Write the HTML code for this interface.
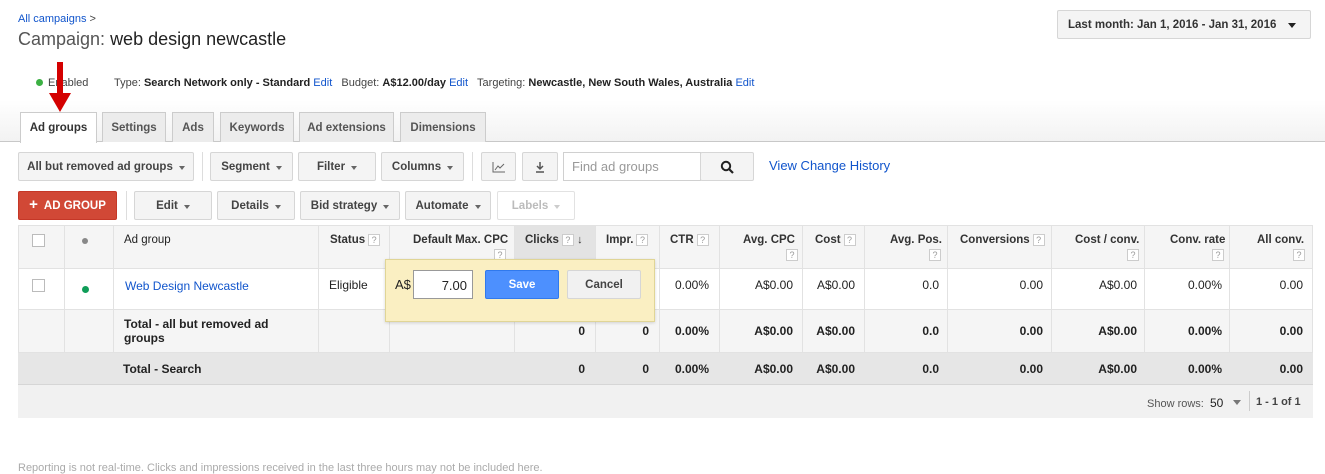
<!DOCTYPE html>
<html><head><meta charset="utf-8"><style>
*{box-sizing:border-box;margin:0;padding:0}
body{width:1325px;height:468px;overflow:hidden;background:#fff;font-family:"Liberation Sans",Arial,sans-serif;font-size:12px;color:#222;position:relative}
.a{position:absolute}
a,.lk{color:#1155cc;text-decoration:none}
.btn{position:absolute;height:29px;border:1px solid #d6d6d6;border-radius:2px;background:#f4f4f4;font-weight:bold;font-size:11.5px;color:#444;display:flex;align-items:center;justify-content:center}
.car{display:inline-block;width:0;height:0;border-left:3.5px solid transparent;border-right:3.5px solid transparent;border-top:4px solid #666;margin-left:6px;margin-top:2px}
.tab{position:absolute;top:112px;height:30px;border:1px solid #ccc;border-bottom:none;background:#ececec;font-weight:bold;font-size:11.5px;color:#555;display:flex;align-items:center;justify-content:center}
.q{display:inline-block;width:12px;height:12px;border:1px solid #ccc;font-size:9px;color:#999;text-align:center;line-height:10px;font-weight:normal;vertical-align:middle;margin-left:3px;background:#fff}
.vl{position:absolute;width:1px;background:#e2e2e2}
.h{position:absolute;top:234px;font-weight:bold;font-size:11.5px;color:#333}
.c{position:absolute;font-size:12px}
.b{font-weight:bold}
</style></head><body>
<div class="a lk" style="left:18px;top:13px;font-size:11px">All campaigns <span style="color:#444">&gt;</span></div>
<div class="a" style="left:18px;top:29px;font-size:18px;color:#555">Campaign: <span style="color:#222">web design newcastle</span></div>

<div class="btn" style="left:1057px;top:10px;width:254px;height:29px;justify-content:flex-start;padding-left:10px;color:#333">Last month: Jan 1, 2016 - Jan 31, 2016 <span class="car" style="margin-left:12px;border-top-color:#222;border-left-width:4px;border-right-width:4px;border-top-width:5px"></span></div>

<div class="a" style="left:36px;top:79px;width:7px;height:7px;border-radius:50%;background:#3cb043"></div>
<div class="a" style="left:48px;top:77px;font-size:11px;color:#444">Enabled</div>
<div class="a" style="left:114px;top:77px;font-size:11px;color:#444">Type: <b style="color:#222">Search Network only - Standard</b> <span class="lk">Edit</span>&nbsp;&nbsp; Budget: <b style="color:#222">A$12.00/day</b> <span class="lk">Edit</span>&nbsp;&nbsp; Targeting: <b style="color:#222">Newcastle, New South Wales, Australia</b> <span class="lk">Edit</span></div>

<div class="a" style="left:0;top:100px;width:1325px;height:42px;background:linear-gradient(#fff,#f2f2f2)"></div>
<div class="a" style="left:0;top:141px;width:1325px;height:1px;background:#c8c8c8"></div>
<div class="tab" style="left:20px;width:77px;background:#fff;color:#333;height:31px;z-index:2">Ad groups</div>
<div class="tab" style="left:102px;width:64px">Settings</div>
<div class="tab" style="left:172px;width:42px">Ads</div>
<div class="tab" style="left:220px;width:74px">Keywords</div>
<div class="tab" style="left:299px;width:95px">Ad extensions</div>
<div class="tab" style="left:400px;width:86px">Dimensions</div>

<svg class="a" style="left:48px;top:62px;z-index:5" width="24" height="52"><rect x="9" y="0" width="6" height="34" fill="#d40000"/><polygon points="1,31 23,31 12,50" fill="#d40000"/></svg>

<div class="btn" style="left:18px;top:152px;width:176px">All but removed ad groups<span class="car"></span></div>
<div class="a" style="left:202px;top:152px;width:1px;height:29px;background:#ddd"></div>
<div class="btn" style="left:210px;top:152px;width:83px">Segment<span class="car"></span></div>
<div class="btn" style="left:298px;top:152px;width:78px">Filter<span class="car"></span></div>
<div class="btn" style="left:381px;top:152px;width:83px">Columns<span class="car"></span></div>
<div class="a" style="left:472px;top:152px;width:1px;height:29px;background:#ddd"></div>
<div class="btn" style="left:481px;top:152px;width:35px"><svg width="14" height="12"><path d="M1 1V11H13" stroke="#666" fill="none"/><path d="M3 9L6 5L8 7L12 3" stroke="#666" fill="none"/></svg></div>
<div class="btn" style="left:522px;top:152px;width:36px"><svg width="12" height="12"><path d="M6 1V8M3 5L6 8L9 5M2 11H10" stroke="#555" stroke-width="1.5" fill="none"/></svg></div>
<div class="a" style="left:563px;top:152px;width:138px;height:29px;border:1px solid #d0d0d0;color:#999;font-size:13px;padding:6px 8px">Find ad groups</div>
<div class="btn" style="left:700px;top:152px;width:54px"><svg width="14" height="14"><circle cx="6" cy="6" r="4.2" stroke="#222" stroke-width="2" fill="none"/><path d="M9 9L13 13" stroke="#222" stroke-width="2.2"/></svg></div>
<div class="a lk" style="left:769px;top:158px;font-size:13px">View Change History</div>

<div class="btn" style="left:18px;top:191px;width:99px;background:#d14836;border-color:#c53727;color:#fff"><span style="font-size:15px;margin-right:6px;margin-top:-2px">+</span>AD GROUP</div>
<div class="a" style="left:126px;top:191px;width:1px;height:29px;background:#ddd"></div>
<div class="btn" style="left:134px;top:191px;width:78px">Edit<span class="car"></span></div>
<div class="btn" style="left:217px;top:191px;width:78px">Details<span class="car"></span></div>
<div class="btn" style="left:300px;top:191px;width:100px">Bid strategy<span class="car"></span></div>
<div class="btn" style="left:405px;top:191px;width:86px">Automate<span class="car"></span></div>
<div class="btn" style="left:497px;top:191px;width:78px;background:#fff;color:#bbb;border-color:#e2e2e2">Labels<span class="car" style="border-top-color:#ccc"></span></div>

<!-- table -->
<div class="a" style="left:18px;top:225px;width:1295px;height:44px;background:#f5f5f5;border:1px solid #e2e2e2"></div>
<div class="a" style="left:514px;top:226px;width:81px;height:43px;background:#e3e3e3"></div>
<div class="a" style="left:18px;top:269px;width:1295px;height:40px;background:#fff;border-left:1px solid #e2e2e2;border-right:1px solid #e2e2e2"></div>
<div class="a" style="left:18px;top:309px;width:1295px;height:44px;background:#f5f5f5;border:1px solid #e2e2e2"></div>
<div class="a" style="left:18px;top:353px;width:1295px;height:32px;background:#e6e6e6;border-bottom:1px solid #d6d6d6"></div>
<div class="a" style="left:18px;top:385px;width:1295px;height:33px;background:#f1f1f1"></div>
<div class="vl" style="left:64px;top:225px;height:128px"></div>
<div class="vl" style="left:113px;top:225px;height:128px"></div>
<div class="vl" style="left:318px;top:225px;height:128px"></div>
<div class="vl" style="left:389px;top:225px;height:128px"></div>
<div class="vl" style="left:514px;top:225px;height:128px"></div>
<div class="vl" style="left:595px;top:225px;height:128px"></div>
<div class="vl" style="left:659px;top:225px;height:128px"></div>
<div class="vl" style="left:719px;top:225px;height:128px"></div>
<div class="vl" style="left:802px;top:225px;height:128px"></div>
<div class="vl" style="left:864px;top:225px;height:128px"></div>
<div class="vl" style="left:947px;top:225px;height:128px"></div>
<div class="vl" style="left:1051px;top:225px;height:128px"></div>
<div class="vl" style="left:1144px;top:225px;height:128px"></div>
<div class="vl" style="left:1229px;top:225px;height:128px"></div>

<div class="a" style="left:32px;top:234px;width:13px;height:13px;border:1px solid #bbb;background:#fff"></div>
<div class="a" style="left:82px;top:238px;width:6px;height:6px;border-radius:50%;background:#888"></div>
<div class="h" style="left:124px;font-weight:normal;color:#222">Ad group</div>
<div class="h" style="left:330px">Status<span class="q">?</span></div>
<div class="h" style="left:413px">Default Max. CPC</div><span class="q a" style="left:491px;top:249px">?</span>
<div class="h" style="left:525px">Clicks<span class="q">?</span> <span style="font-size:11px">&#8595;</span></div>
<div class="h" style="left:606px">Impr.<span class="q">?</span></div>
<div class="h" style="left:670px">CTR<span class="q">?</span></div>
<div class="h" style="left:743px">Avg. CPC</div><span class="q a" style="left:783px;top:249px">?</span>
<div class="h" style="left:815px">Cost<span class="q">?</span></div>
<div class="h" style="left:890px">Avg. Pos.</div><span class="q a" style="left:926px;top:249px">?</span>
<div class="h" style="left:960px">Conversions<span class="q">?</span></div>
<div class="h" style="left:1075px">Cost / conv.</div><span class="q a" style="left:1124px;top:249px">?</span>
<div class="h" style="left:1170px">Conv. rate</div><span class="q a" style="left:1209px;top:249px">?</span>
<div class="h" style="left:1257px">All conv.</div><span class="q a" style="left:1290px;top:249px">?</span>

<!-- row1 -->
<div class="a" style="left:32px;top:279px;width:13px;height:13px;border:1px solid #bbb;background:#fff"></div>
<div class="a" style="left:82px;top:286px;width:7px;height:7px;border-radius:50%;background:#0f9d58"></div>
<div class="c lk" style="left:125px;top:279px">Web Design Newcastle</div>
<div class="c" style="left:329px;top:278px">Eligible</div>
<div class="c" style="left:659px;width:50px;text-align:right;top:278px">0.00%</div>
<div class="c" style="left:719px;width:74px;text-align:right;top:278px">A$0.00</div>
<div class="c" style="left:802px;width:53px;text-align:right;top:278px">A$0.00</div>
<div class="c" style="left:864px;width:75px;text-align:right;top:278px">0.0</div>
<div class="c" style="left:947px;width:96px;text-align:right;top:278px">0.00</div>
<div class="c" style="left:1051px;width:86px;text-align:right;top:278px">A$0.00</div>
<div class="c" style="left:1144px;width:78px;text-align:right;top:278px">0.00%</div>
<div class="c" style="left:1229px;width:74px;text-align:right;top:278px">0.00</div>

<!-- row2 -->
<div class="c b" style="left:124px;top:317px;line-height:14px">Total - all but removed ad<br>groups</div>
<div class="c b" style="left:514px;width:71px;text-align:right;top:324px">0</div>
<div class="c b" style="left:595px;width:54px;text-align:right;top:324px">0</div>
<div class="c b" style="left:659px;width:50px;text-align:right;top:324px">0.00%</div>
<div class="c b" style="left:719px;width:74px;text-align:right;top:324px">A$0.00</div>
<div class="c b" style="left:802px;width:53px;text-align:right;top:324px">A$0.00</div>
<div class="c b" style="left:864px;width:75px;text-align:right;top:324px">0.0</div>
<div class="c b" style="left:947px;width:96px;text-align:right;top:324px">0.00</div>
<div class="c b" style="left:1051px;width:86px;text-align:right;top:324px">A$0.00</div>
<div class="c b" style="left:1144px;width:78px;text-align:right;top:324px">0.00%</div>
<div class="c b" style="left:1229px;width:74px;text-align:right;top:324px">0.00</div>

<!-- row3 -->
<div class="c b" style="left:123px;top:362px">Total - Search</div>
<div class="c b" style="left:514px;width:71px;text-align:right;top:362px">0</div>
<div class="c b" style="left:595px;width:54px;text-align:right;top:362px">0</div>
<div class="c b" style="left:659px;width:50px;text-align:right;top:362px">0.00%</div>
<div class="c b" style="left:719px;width:74px;text-align:right;top:362px">A$0.00</div>
<div class="c b" style="left:802px;width:53px;text-align:right;top:362px">A$0.00</div>
<div class="c b" style="left:864px;width:75px;text-align:right;top:362px">0.0</div>
<div class="c b" style="left:947px;width:96px;text-align:right;top:362px">0.00</div>
<div class="c b" style="left:1051px;width:86px;text-align:right;top:362px">A$0.00</div>
<div class="c b" style="left:1144px;width:78px;text-align:right;top:362px">0.00%</div>
<div class="c b" style="left:1229px;width:74px;text-align:right;top:362px">0.00</div>

<div class="c" style="left:1147px;top:396px;font-size:11px;color:#555">Show rows:&nbsp; <span style="color:#222;font-size:12px">50</span></div>
<div class="a" style="left:1233px;top:400px;border-left:4px solid transparent;border-right:4px solid transparent;border-top:5px solid #777"></div>
<div class="a" style="left:1249px;top:391px;width:1px;height:20px;background:#ccc"></div>
<div class="c b" style="left:1256px;top:396px;font-size:11px;color:#444">1 - 1 of 1</div>

<!-- popup -->
<div class="a" style="left:385px;top:259px;width:270px;height:63px;background:#faefc2;border:1px solid #e0d596;box-shadow:0 1px 3px rgba(0,0,0,.15)"></div>
<div class="c" style="left:395px;top:277px;font-size:13px">A$</div>
<div class="a" style="left:413px;top:270px;width:60px;height:29px;border:1px solid #999;background:#fff;font-size:13px;text-align:right;padding:7px 5px 0 0">7.00</div>
<div class="btn" style="left:485px;top:270px;width:74px;background:#4d90fe;border-color:#3079ed;color:#fff">Save</div>
<div class="btn" style="left:567px;top:270px;width:74px;background:#f1f1f1">Cancel</div>

<div class="c" style="left:18px;top:462px;font-size:11px;color:#aaa">Reporting is not real-time. Clicks and impressions received in the last three hours may not be included here.</div>
</body></html>
